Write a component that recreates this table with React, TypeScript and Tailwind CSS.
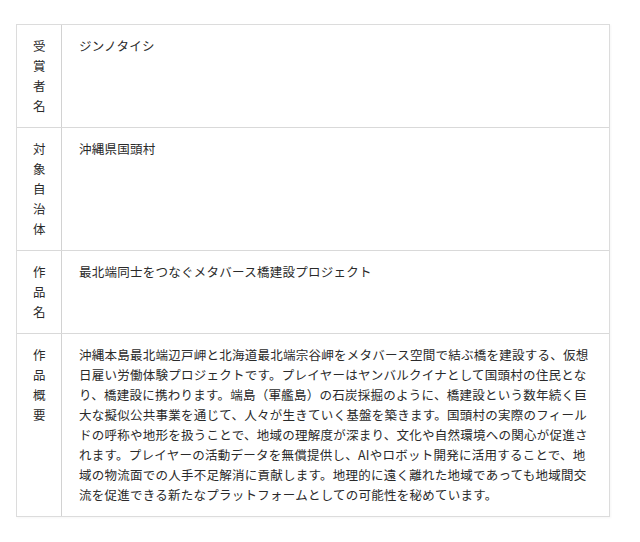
const ROWS: { label: string; lines: string[] }[] = [
  { label: '受賞者名', lines: ['ジンノタイシ'] },
  { label: '対象自治体', lines: ['沖縄県国頭村'] },
  { label: '作品名', lines: ['最北端同士をつなぐメタバース橋建設プロジェクト'] },
  {
    label: '作品概要',
    lines: [
      '沖縄本島最北端辺戸岬と北海道最北端宗谷岬をメタバース空間で結ぶ橋を建設する、仮想',
      '日雇い労働体験プロジェクトです。プレイヤーはヤンバルクイナとして国頭村の住民とな',
      'り、橋建設に携わります。端島（軍艦島）の石炭採掘のように、橋建設という数年続く巨',
      '大な擬似公共事業を通じて、人々が生きていく基盤を築きます。国頭村の実際のフィール',
      'ドの呼称や地形を扱うことで、地域の理解度が深まり、文化や自然環境への関心が促進さ',
      'れます。プレイヤーの活動データを無償提供し、AIやロボット開発に活用することで、地',
      '域の物流面での人手不足解消に貢献します。地理的に遠く離れた地域であっても地域間交',
      '流を促進できる新たなプラットフォームとしての可能性を秘めています。',
    ],
  },
]

export default function App() {
  return (
    <div
      className="min-h-[542px] w-[640px] bg-white pl-[16px] pt-[24px] text-[12.5px] leading-[20px] tracking-[0.25px] text-[#2a2a2a]"
      style={{ fontFamily: '"Noto Sans CJK JP", "Noto Sans", sans-serif' }}
    >
      <div className="w-[594px] border border-[#dcdcdc] shadow-[1px_1px_2px_rgba(0,0,0,0.04)]">
        {ROWS.map((row, i) => (
          <div key={row.label} className={`flex ${i > 0 ? 'border-t border-[#d9d9d9]' : ''}`}>
            {/* label, one character per line */}
            <div className="flex w-[45px] shrink-0 flex-col items-center border-r border-[#d2d2d2] py-[11px] pl-[1px]">
              {Array.from(row.label).map((ch, j) => (
                <span key={j}>{ch}</span>
              ))}
            </div>
            <div className="flex-1 whitespace-nowrap py-[11px] pl-[17px]">
              {row.lines.map((line, j) => (
                <div key={j}>{line}</div>
              ))}
            </div>
          </div>
        ))}
      </div>
    </div>
  )
}
